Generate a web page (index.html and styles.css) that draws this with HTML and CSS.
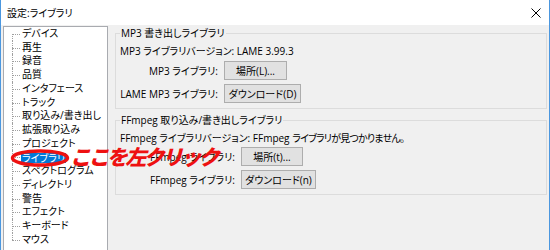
FILE: index.html
```html
<!DOCTYPE html>
<html lang="ja">
<head>
<meta charset="utf-8">
<title>設定:ライブラリ</title>
<link rel="stylesheet" href="styles.css">
</head>
<body>
<div class="window">
  <div class="titlebar">
    <span class="title">設定:ライブラリ</span>
    <svg class="close" width="10" height="10" viewBox="0 0 10 10"><path d="M0.5 0.5 L9.5 9.5 M9.5 0.5 L0.5 9.5" stroke="#000" stroke-width="1" fill="none"/></svg>
  </div>
  <div class="body">
    <div class="tree">
      <ul class="items">
        <li>デバイス</li>
        <li>再生</li>
        <li>録音</li>
        <li>品質</li>
        <li>インタフェース</li>
        <li>トラック</li>
        <li>取り込み/書き出し</li>
        <li>拡張取り込み</li>
        <li>プロジェクト</li>
        <li><span class="sel">ライブラリ</span></li>
        <li>スペクトログラム</li>
        <li>ディレクトリ</li>
        <li>警告</li>
        <li>エフェクト</li>
        <li>キーボード</li>
        <li>マウス</li>
      </ul>
    </div>
    <div class="panel">
      <fieldset class="group g1">
        <legend>MP3 書き出しライブラリ</legend>
        <div class="info">MP3 ライブラリバージョン: LAME 3.99.3</div>
        <div class="row first"><span class="lbl">MP3 ライブラリ:</span><button class="btn w-loc">場所(L)...</button></div>
        <div class="row"><span class="lbl">LAME MP3 ライブラリ:</span><button class="btn w-dl">ダウンロード(D)</button></div>
      </fieldset>
      <fieldset class="group g2">
        <legend>FFmpeg 取り込み/書き出しライブラリ</legend>
        <div class="info">FFmpeg ライブラリバージョン: FFmpeg <span class="narrow">ライブラリが見つかりません。</span></div>
        <div class="row first"><span class="lbl">FFmpeg ライブラリ:</span><button class="btn w-loc2">場所(t)...</button></div>
        <div class="row"><span class="lbl">FFmpeg ライブラリ:</span><button class="btn w-dl2">ダウンロード(n)</button></div>
      </fieldset>
    </div>
  </div>
  <svg class="circle" width="62" height="22" viewBox="0 0 62 22"><ellipse cx="31" cy="11" rx="27.5" ry="7" fill="none" stroke="#ee1111" stroke-width="3.5"/></svg>
  <div class="annot">ここを左クリック</div>
</div>
</body>
</html>
```

FILE: styles.css
```css
* { box-sizing: border-box; }
html, body { margin: 0; padding: 0; }
body {
  width: 550px;
  height: 250px;
  overflow: hidden;
  background: #f0f0f0;
  font-family: "Open Sans", "Noto Sans CJK JP", sans-serif;
  font-size: 10px;
  font-feature-settings: "palt";
  color: #000;
}
.window {
  position: relative;
  width: 550px;
  height: 250px;
  border-left: 1px solid #4b97df;
  border-right: 1px solid #4b97df;
  background: #f0f0f0;
  overflow: hidden;
}
.titlebar {
  height: 25px;
  background: #fff;
  display: flex;
  align-items: center;
  justify-content: space-between;
  padding: 0 8px 0 6px;
}
.title { font-size: 10px; line-height: 14px; }
.close { display: block; }
.body {
  display: flex;
  align-items: flex-start;
  padding-top: 1px;
}
.tree {
  margin-left: 2px;
  width: 105px;
  height: 240px;
  background: #fff;
  border: 1px solid #a9abb0;
}
.items {
  list-style: none;
  margin: 0;
  padding: 0;
  position: relative;
}
.items li {
  position: relative;
  height: 13.73px;
  line-height: 13.73px;
  padding-left: 18px;
  white-space: nowrap;
}
.items li::before {
  content: "";
  position: absolute;
  left: 8px;
  top: 7px;
  width: 8px;
  border-top: 1px dotted #a0a0a0;
}
.items li::after {
  content: "";
  position: absolute;
  left: 8px;
  top: 0;
  height: 13.73px;
  border-left: 1px dotted #a0a0a0;
}
.items li:first-child::after { top: 7px; height: 7px; }
.items li:last-child::after { height: 7px; }
.sel {
  display: inline-block;
  background: #0078d7;
  color: #fff;
  height: 10px;
  line-height: 10px;
  padding: 0 1px;
  margin-left: -1px;
  vertical-align: middle;
}
.panel {
  margin-left: 7px;
  width: 432px;
}
.group {
  margin: 0;
  border: 1px solid #dcdcdc;
  padding: 0 0 5px 4px;
  min-width: 0;
}
.group legend {
  padding: 0 1px;
  line-height: 14px;
}
.g2 { margin-top: 4px; }
.info {
  margin-top: 4px;
  line-height: 14px;
  white-space: nowrap;
}
.narrow { letter-spacing: -0.8px; }
.row {
  display: flex;
  align-items: center;
  margin-top: 4px;
}
.row.first { margin-top: 3px; }
.g2 .row.first { margin-top: 2px; }
.lbl {
  text-align: right;
  margin-right: 6px;
  white-space: nowrap;
}
.g1 .lbl { width: 98px; }
.g2 .lbl { width: 115px; }
.btn {
  height: 19px;
  padding: 0;
  font: inherit;
  font-feature-settings: "palt";
  background: #e1e1e1;
  border: 1px solid #adadad;
  color: #000;
  line-height: 16px;
  text-align: center;
}
.w-loc { width: 63px; }
.w-dl { width: 77px; }
.w-loc2 { width: 62px; }
.w-dl2 { width: 75px; }
.circle {
  position: absolute;
  left: 8px;
  top: 147px;
}
.annot {
  position: absolute;
  left: 69px;
  top: 146px;
  font-family: "Noto Sans CJK JP", sans-serif;
  font-size: 21px;
  line-height: 21px;
  font-weight: 900;
  font-style: italic;
  letter-spacing: -2.6px;
  color: #ee1111;
  font-feature-settings: normal;
  white-space: nowrap;
}
```
